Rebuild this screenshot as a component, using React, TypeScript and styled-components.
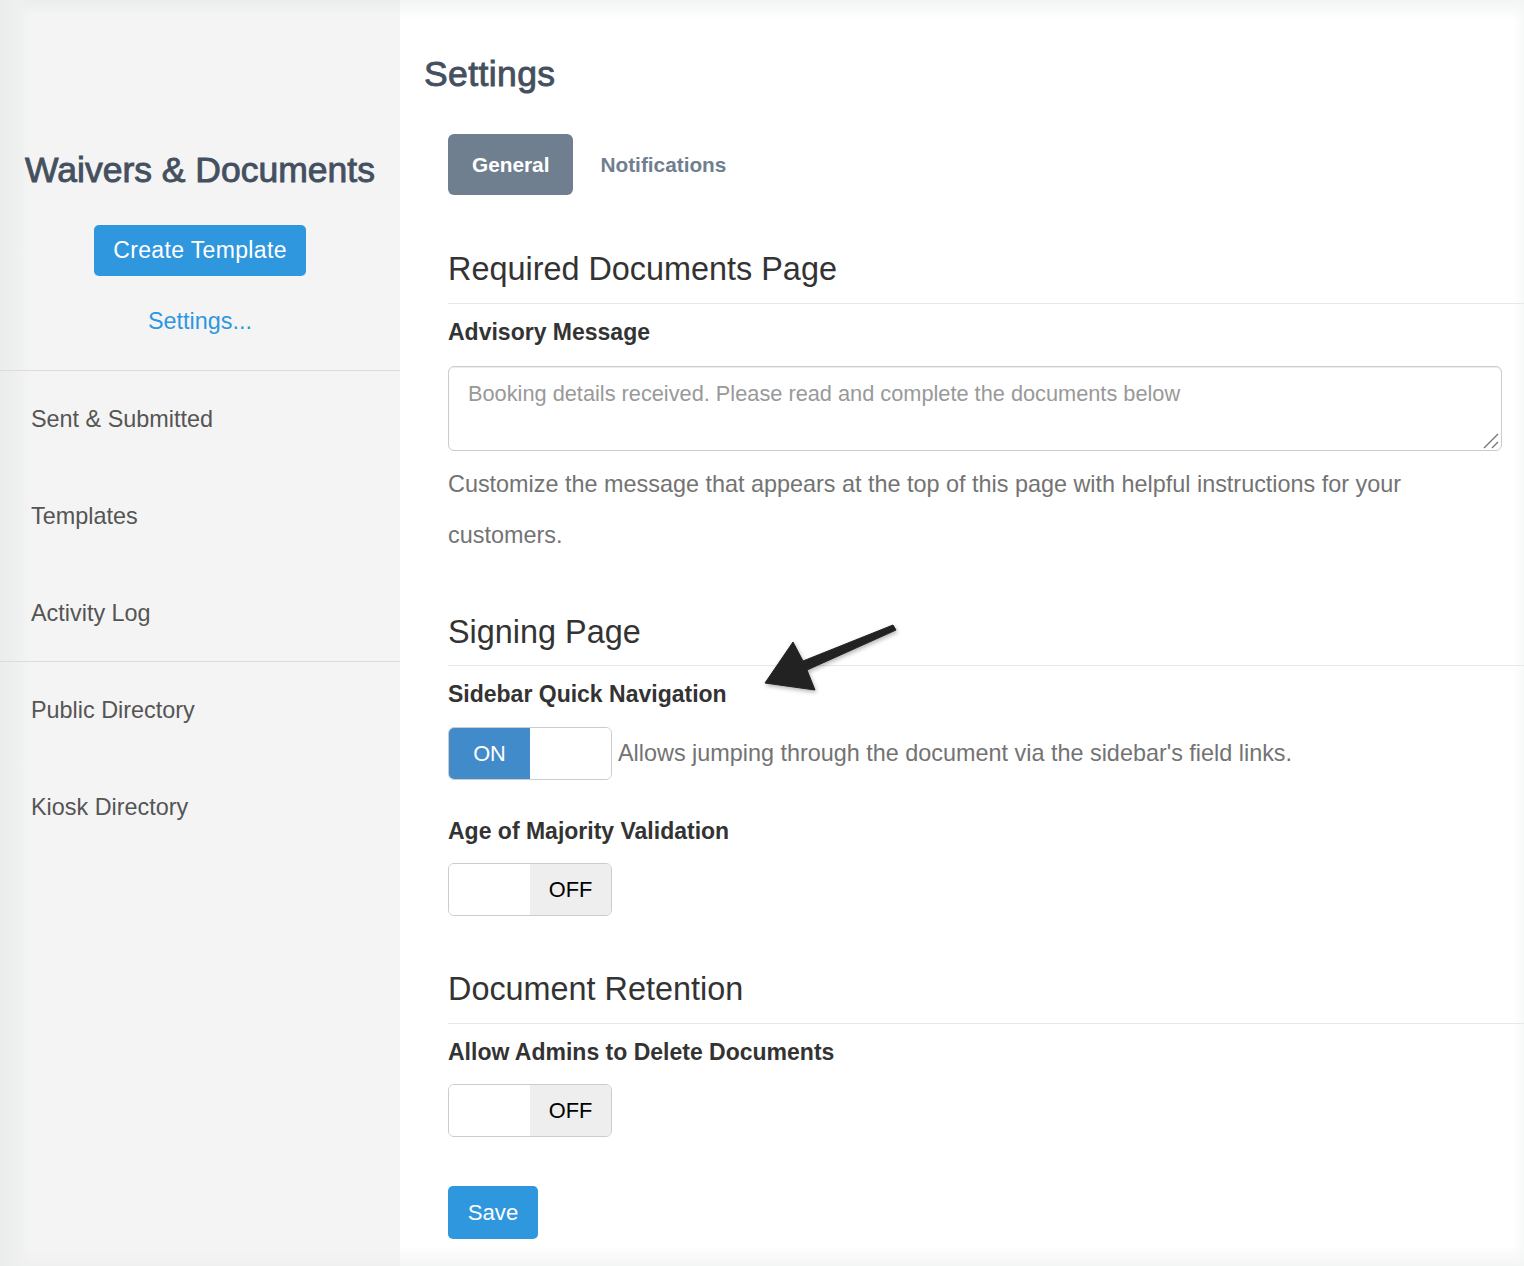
import React from "react";
import styled, { createGlobalStyle } from "styled-components";

const GlobalStyle = createGlobalStyle`
  html, body {
    margin: 0;
    padding: 0;
    background: #fff;
    font-family: "Liberation Sans", Arial, sans-serif;
  }
`;

const Page = styled.div`
  display: flex;
  height: 1266px;
  overflow: hidden;
  position: relative;
`;

const Sidebar = styled.aside`
  width: 400px;
  flex-shrink: 0;
  background-color: #f4f4f4;
  background-image: linear-gradient(to right, #ebecec, #eeefef 16px, rgba(244, 244, 244, 0) 30px),
    linear-gradient(to bottom, #ebecec, rgba(244, 244, 244, 0) 16px),
    linear-gradient(to top, #f0f0f0, rgba(244, 244, 244, 0) 16px);
  display: flex;
  flex-direction: column;
`;

const SidebarHead = styled.div`
  padding-top: 150px;
  height: 220px;
  display: flex;
  flex-direction: column;
  align-items: center;
  border-bottom: 1px solid #dcdcdc;
`;

const SidebarTitle = styled.h2`
  margin: 0;
  font-size: 35.5px;
  line-height: 40px;
  font-weight: 400;
  -webkit-text-stroke: 0.9px #44505f;
  color: #44505f;
`;

const PrimaryButton = styled.button`
  border: 0;
  border-radius: 5px;
  background: #2f97de;
  color: #fff;
  font: 400 23px "Liberation Sans", Arial, sans-serif;
  padding: 0;
`;

const CreateButton = styled(PrimaryButton)`
  width: 212px;
  height: 51px;
  margin-top: 35px;
  letter-spacing: 0.35px;
`;

const SettingsLink = styled.a`
  margin-top: 31px;
  font-size: 23.4px;
  line-height: 28px;
  color: #2f97de;
`;

const NavGroup = styled.nav`
  display: flex;
  flex-direction: column;
  box-shadow: ${({ $divided }: { $divided?: boolean }) =>
    $divided ? "inset 0 -1px 0 #dcdcdc" : "none"};
`;

const NavItem = styled.a`
  height: 97px;
  display: flex;
  align-items: center;
  padding-left: 31px;
  font-size: 23.4px;
  color: #555;
`;

const Main = styled.main`
  flex: 1;
  padding: 0 0 0 24px;
  background-color: #fff;
  background-image: linear-gradient(to bottom, #f3f4f4, rgba(255, 255, 255, 0) 20px),
    linear-gradient(to top, #f4f5f5, rgba(255, 255, 255, 0) 20px),
    linear-gradient(to left, #f7f8f8, rgba(255, 255, 255, 0) 10px);
`;

const PageTitle = styled.h1`
  margin: 0;
  padding-top: 54px;
  font-size: 35.5px;
  line-height: 40px;
  font-weight: 400;
  letter-spacing: 0.4px;
  -webkit-text-stroke: 0.9px #44505f;
  color: #44505f;
`;

const Content = styled.div`
  padding-left: 24px;
`;

const Tabs = styled.div`
  display: flex;
  margin-top: 40px;
`;

const Tab = styled.a<{ $active?: boolean }>`
  height: 61px;
  padding: 0 24px;
  display: flex;
  align-items: center;
  border-radius: 6px;
  font-size: 20.8px;
  font-weight: 700;
  color: ${({ $active }) => ($active ? "#fff" : "#6f7f90")};
  background: ${({ $active }) => ($active ? "#6f7f90" : "transparent")};
  margin-right: 3px;
`;

const SectionTitle = styled.h3<{ $top: number; $height?: number }>`
  margin: ${({ $top }) => $top}px 0 0;
  height: ${({ $height }) => $height ?? 54}px;
  font-size: 32.4px;
  line-height: 40px;
  font-weight: 400;
  color: #333;
  border-bottom: 1px solid #e8e8e8;
`;

const FieldLabel = styled.div<{ $top: number }>`
  margin-top: ${({ $top }) => $top}px;
  font-size: 23px;
  line-height: 28px;
  font-weight: 700;
  color: #333;
`;

const MessageWrap = styled.div`
  position: relative;
  width: 1054px;
  margin-top: 20px;
`;

const MessageBox = styled.textarea`
  display: block;
  box-sizing: border-box;
  width: 100%;
  height: 85px;
  padding: 13px 19px;
  border: 1px solid #ccc;
  border-radius: 6px;
  box-shadow: inset 0 1px 1px rgba(0, 0, 0, 0.08);
  font: 400 21.75px/28px "Liberation Sans", Arial, sans-serif;
  outline: 0;
  resize: none;
  &::placeholder {
    color: #999;
    opacity: 1;
  }
`;

const ResizeGrip = styled.svg`
  position: absolute;
  right: 1px;
  bottom: 1px;
  width: 18px;
  height: 18px;
`;

const HelpText = styled.p`
  margin: 8px 0 0;
  width: 1000px;
  font-size: 23.4px;
  line-height: 51px;
  color: #737373;
`;

const ToggleRow = styled.div<{ $top: number }>`
  display: flex;
  align-items: center;
  margin-top: ${({ $top }) => $top}px;
`;

const ToggleFrame = styled.div`
  box-sizing: border-box;
  width: 164px;
  height: 53px;
  display: flex;
  border: 1px solid #ccc;
  border-radius: 6px;
  overflow: hidden;
  background: #fff;
`;

const ToggleSide = styled.span<{ $tone?: "on" | "off" }>`
  width: 81px;
  display: flex;
  align-items: center;
  justify-content: center;
  font-size: 21.8px;
  color: ${({ $tone }) => ($tone === "on" ? "#fff" : "#000")};
  background: ${({ $tone }) =>
    $tone === "on" ? "#428bca" : $tone === "off" ? "#eee" : "#fff"};
  &:last-child {
    flex: 1;
  }
`;

const ToggleHint = styled.span`
  margin-left: 6px;
  font-size: 23.4px;
  color: #737373;
`;

const SaveButton = styled(PrimaryButton)`
  display: block;
  width: 90px;
  height: 53px;
  margin-top: 49px;
  font-size: 22.2px;
`;

const ArrowMark = styled.svg`
  position: absolute;
  left: 755px;
  top: 615px;
  width: 150px;
  height: 85px;
  filter: drop-shadow(1px 2px 2px rgba(0, 0, 0, 0.3));
`;

const Toggle = ({ on }: { on: boolean }) => (
  <ToggleFrame>
    {on ? <ToggleSide $tone="on">ON</ToggleSide> : <ToggleSide />}
    {on ? <ToggleSide /> : <ToggleSide $tone="off">OFF</ToggleSide>}
  </ToggleFrame>
);

const App = () => (
  <>
    <GlobalStyle />
    <Page>
      <Sidebar>
        <SidebarHead>
          <SidebarTitle>Waivers &amp; Documents</SidebarTitle>
          <CreateButton>Create Template</CreateButton>
          <SettingsLink>Settings...</SettingsLink>
        </SidebarHead>
        <NavGroup $divided>
          <NavItem>Sent &amp; Submitted</NavItem>
          <NavItem>Templates</NavItem>
          <NavItem>Activity Log</NavItem>
        </NavGroup>
        <NavGroup>
          <NavItem>Public Directory</NavItem>
          <NavItem>Kiosk Directory</NavItem>
        </NavGroup>
      </Sidebar>
      <Main>
        <PageTitle>Settings</PageTitle>
        <Content>
          <Tabs>
            <Tab $active>General</Tab>
            <Tab>Notifications</Tab>
          </Tabs>
          <SectionTitle $top={54}>Required Documents Page</SectionTitle>
          <FieldLabel $top={14}>Advisory Message</FieldLabel>
          <MessageWrap>
            <MessageBox
              readOnly
              placeholder="Booking details received. Please read and complete the documents below"
            />
            <ResizeGrip viewBox="0 0 18 18">
              <path
                d="M1 16 L15 2 M9 16 L15 10"
                stroke="#777"
                strokeWidth="1.4"
                fill="none"
              />
            </ResizeGrip>
          </MessageWrap>
          <HelpText>
            Customize the message that appears at the top of this page with
            helpful instructions for your customers.
          </HelpText>
          <SectionTitle $top={51} $height={53}>
            Signing Page
          </SectionTitle>
          <FieldLabel $top={14}>Sidebar Quick Navigation</FieldLabel>
          <ToggleRow $top={19}>
            <Toggle on />
            <ToggleHint>
              Allows jumping through the document via the sidebar's field links.
            </ToggleHint>
          </ToggleRow>
          <FieldLabel $top={37}>Age of Majority Validation</FieldLabel>
          <ToggleRow $top={18}>
            <Toggle on={false} />
          </ToggleRow>
          <SectionTitle $top={53}>Document Retention</SectionTitle>
          <FieldLabel $top={14}>Allow Admins to Delete Documents</FieldLabel>
          <ToggleRow $top={18}>
            <Toggle on={false} />
          </ToggleRow>
          <SaveButton>Save</SaveButton>
        </Content>
      </Main>
      <ArrowMark viewBox="0 0 150 85">
        <path
          d="M138 10 L141 15 L52 55 L60 75 L10 68 L38 27 L48 46 Z"
          fill="#222"
          stroke="#222"
          strokeLinejoin="round"
        />
      </ArrowMark>
    </Page>
  </>
);

export default App;
